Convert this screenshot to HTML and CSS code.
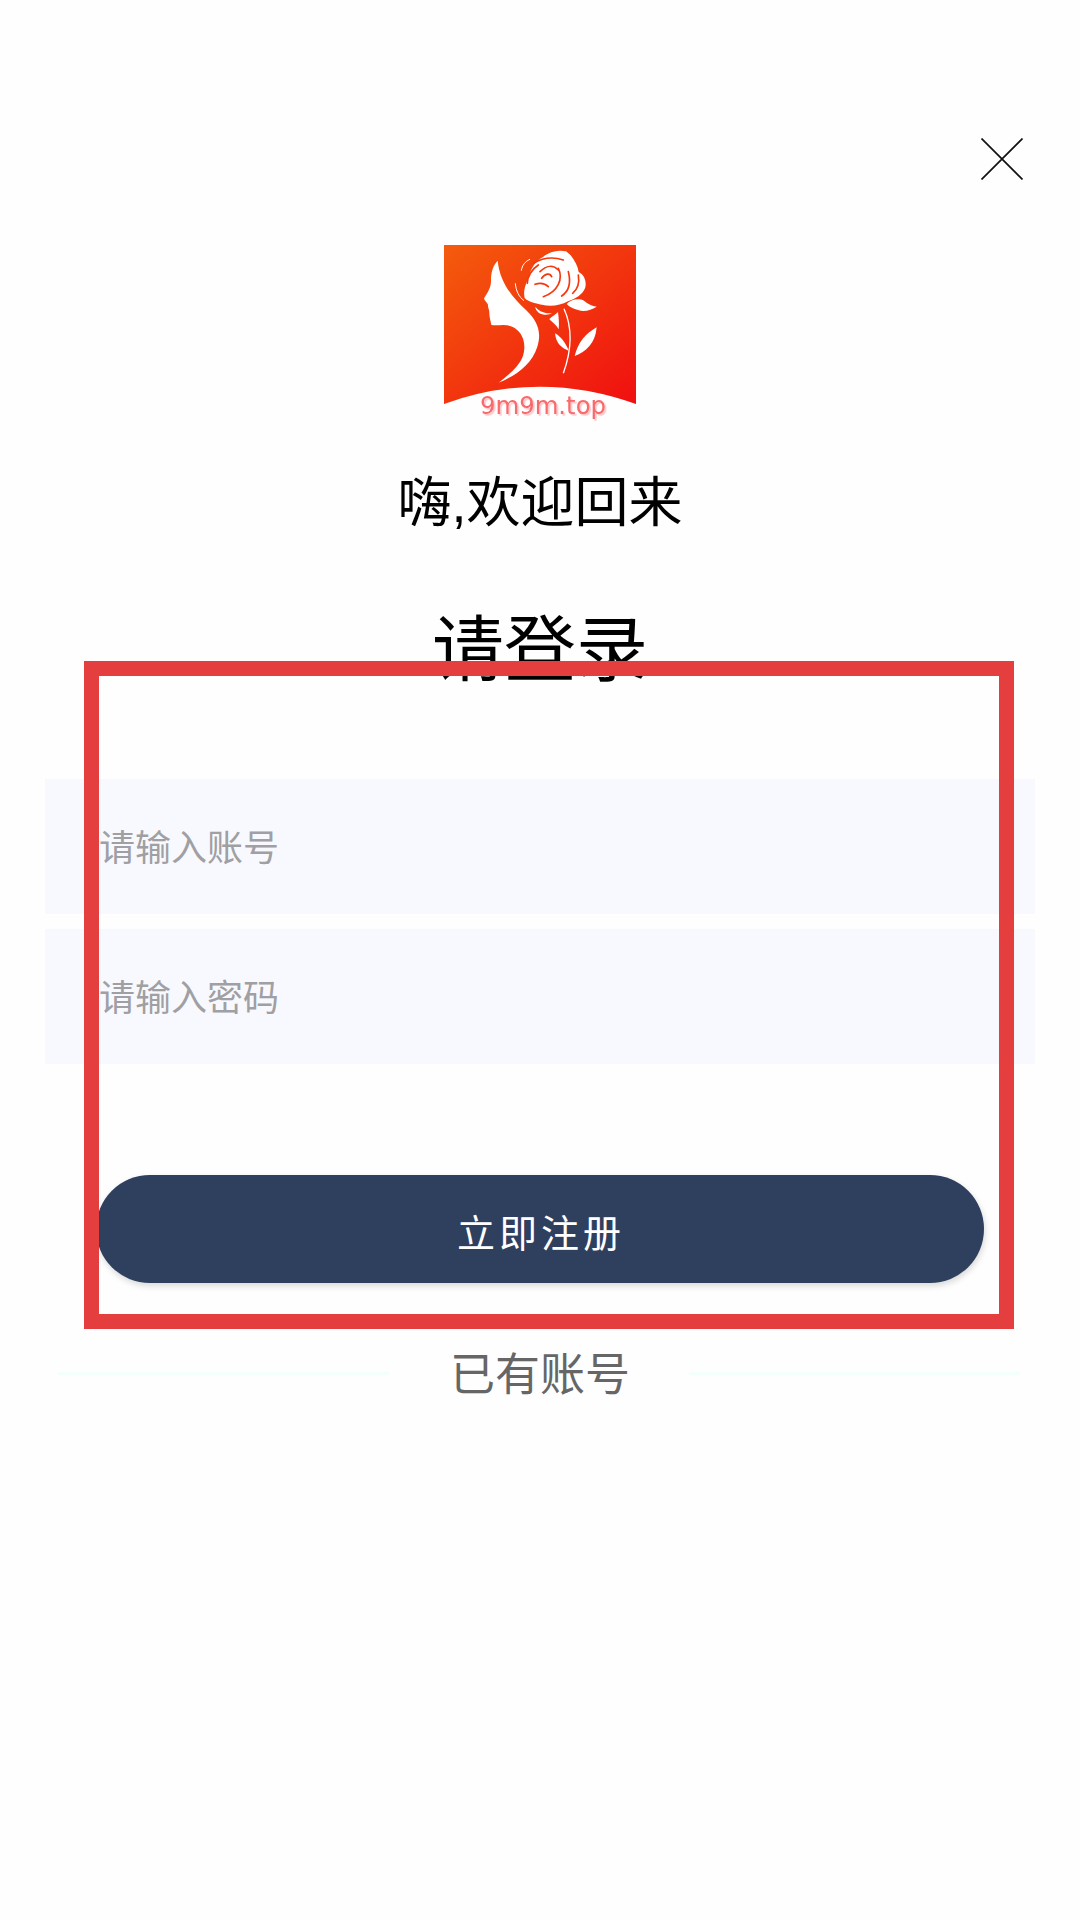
FILE: index.html
```html
<!DOCTYPE html>
<html lang="zh-CN">
<head>
    <meta charset="UTF-8">
    <meta name="viewport" content="width=device-width, initial-scale=1.0">
    <title>请登录</title>
    <link rel="stylesheet" href="styles.css">
</head>

<body>
    <header class="top-bar">
        <svg class="close-icon" viewBox="0 0 42 42">
            <path d="M0.5 0.5L41.5 41.5M41.5 0.5L0.5 41.5" stroke="#111" stroke-width="1.7" fill="none"/>
        </svg>
    </header>

    <main class="login">
        <svg class="logo" viewBox="72 45 576 540">
            <defs>
                <linearGradient id="logo-bg" x1="0" y1="0" x2="1" y2="1">
                    <stop offset="0" stop-color="#f45c0c"/>
                    <stop offset="1" stop-color="#f00f10"/>
                </linearGradient>
            </defs>
            <path d="M72 45H648V522Q360 418 72 522Z" fill="url(#logo-bg)"/>
            <!-- face -->
            <path fill="#fff" d="M233 92C220 105 213 125 213 150C214 170 205 185 192 205C194 214 202 218 204 224C203 232 208 238 208 246C207 258 212 272 214 285C235 289 262 278 285 295C310 312 320 345 308 380C296 410 262 438 236 458C285 438 335 405 352 350C366 305 352 272 318 240C280 205 240 160 233 92Z"/>
            <!-- rose -->
            <path fill="#fff" d="M314 204C308 178 320 160 326 140C334 110 350 90 370 80C386 66 412 58 438 64L452 76C464 92 474 110 476 126C492 134 500 152 496 172C490 194 464 208 444 214C420 228 388 230 366 224C344 220 326 216 314 204Z"/>
            <g fill="none" stroke="#f4380e" stroke-width="5" stroke-linecap="round">
                <path d="M355 105C335 118 322 140 322 160"/>
                <path d="M340 100C370 82 400 80 430 90"/>
                <path d="M360 125C380 105 400 105 415 120"/>
                <path d="M365 145C375 130 390 128 395 140"/>
                <path d="M345 163C360 158 375 160 385 170"/>
                <path d="M415 115C430 145 415 185 370 200"/>
                <path d="M445 125C455 165 445 185 425 198"/>
                <path d="M475 135C480 165 470 180 458 190"/>
            </g>
            <path fill="none" stroke="#fff" stroke-width="3" d="M286 160C288 182 296 200 312 212M330 88C316 94 306 106 304 122"/>
            <!-- leaves and stem -->
            <path fill="#fff" d="M440 222C452 208 476 204 492 212C504 222 516 228 530 230C512 240 494 248 474 240C460 236 450 232 440 222Z"/>
            <path fill="#fff" d="M346 230C358 246 376 250 396 250C386 256 368 256 356 248C350 242 346 238 346 230Z"/>
            <path fill="#fff" d="M414 246C406 254 392 262 388 268C396 276 408 284 416 298C418 282 416 262 414 246Z"/>
            <path fill="none" stroke="#fff" stroke-width="4" d="M432 236C452 280 462 340 430 430"/>
            <path fill="#fff" d="M405 310C408 340 424 354 446 362C438 342 426 322 405 310Z"/>
            <path fill="#fff" d="M530 292C498 310 474 336 464 378C498 366 526 340 530 292Z"/>
            <text class="logo-text" x="180" y="552">9m9m.top</text>
        </svg>

        <h2 class="welcome">嗨,欢迎回来</h2>
        <h1 class="login-title">请登录</h1>

        <div class="fields">
            <input type="text" class="field" placeholder="请输入账号">
            <input type="password" class="field" placeholder="请输入密码">
        </div>

        <button class="register-button">立即注册</button>

        <div class="divider">
            <span class="divider-line"></span>
            <span class="divider-text">已有账号</span>
            <span class="divider-line"></span>
        </div>
    </main>

    <!-- red marker drawn over the form -->
    <div class="marker"></div>
</body>
</html>
```

FILE: styles.css
```css
* {
    box-sizing: border-box;
}

body {
    margin: 0;
    height: 1920px;
    overflow: hidden;
    position: relative;
    background-color: #fefefe;
    font-family: "Liberation Sans", "Noto Sans CJK SC", sans-serif;
}

.top-bar {
    display: flex;
    justify-content: flex-end;
    padding: 138px 57px 0 0;
}

.close-icon {
    width: 42px;
    height: 42px;
}

.login {
    display: flex;
    flex-direction: column;
    align-items: center;
}

.logo {
    width: 192px;
    height: 180px;
    margin-top: 65px;
}

.logo-text {
    font-family: "DejaVu Sans", sans-serif;
    font-size: 73px;
    fill: #f96a6c;
    filter: drop-shadow(5px 5px 0 #fbc6c8);
}

.welcome {
    margin: 43px 0 0;
    font-size: 54px;
    line-height: 70px;
    font-weight: normal;
    color: #000;
}

.login-title {
    margin: 67px 0 0;
    font-size: 72px;
    line-height: 90px;
    font-weight: normal;
    color: #000;
}

.fields {
    display: flex;
    flex-direction: column;
    gap: 15px;
    width: 990px;
    margin-top: 84px;
}

.field {
    height: 135px;
    padding: 0 54px 4px;
    border: none;
    outline: none;
    background-color: #f8f9fe;
    font-family: "Noto Sans CJK SC", sans-serif;
    font-size: 36px;
}

.field::placeholder {
    color: #a09fa3;
}

.register-button {
    align-self: flex-start;
    width: 888px;
    height: 108px;
    margin: 111px 0 0 96px;
    padding: 2px 0 0 2px;
    border: none;
    border-radius: 54px;
    background-color: #2f405e;
    box-shadow: 1px 3px 6px rgba(0, 0, 0, 0.15);
    color: #fff;
    font-family: "Noto Sans CJK SC", sans-serif;
    font-size: 38px;
    letter-spacing: 4px;
}

.divider {
    display: flex;
    align-items: center;
    width: 100%;
    height: 60px;
    margin-top: 60px;
    padding: 0 60px 0 58px;
}

.divider-line {
    flex: 1;
    height: 3px;
    background-color: #f2fffb;
}

.divider-text {
    margin: 0 59px 4px 61px;
    font-family: "Noto Sans CJK SC", sans-serif;
    font-size: 45px;
    color: #666;
}

.marker {
    position: absolute;
    left: 84px;
    top: 661px;
    width: 930px;
    height: 668px;
    border: 15px solid #e53e3e;
}
```
